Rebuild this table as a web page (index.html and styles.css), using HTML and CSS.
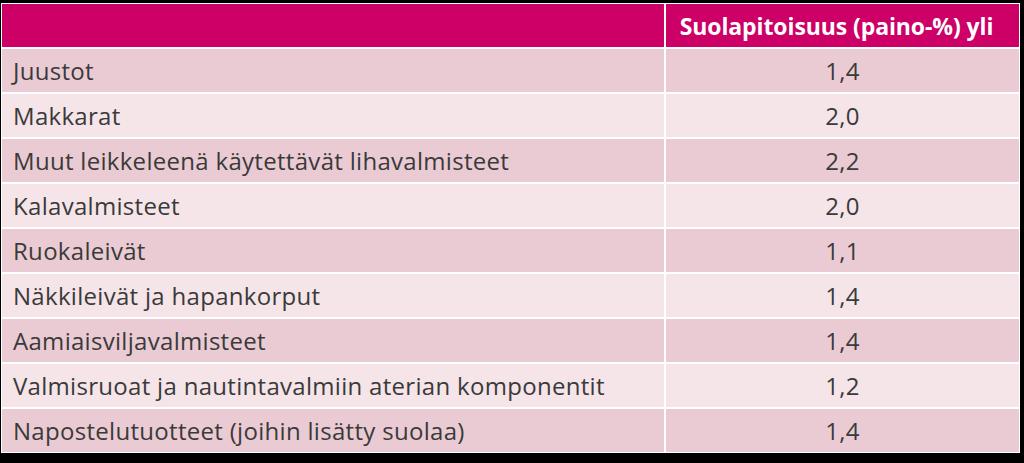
FILE: index.html
```html
<!DOCTYPE html>
<html lang="fi">
<head>
<meta charset="utf-8">
<title>Suolapitoisuus</title>
<link rel="stylesheet" href="styles.css">
</head>
<body>
<div class="table">
  <div class="cell head"></div>
  <div class="cell head val">Suolapitoisuus (paino-%) yli</div>
  <div class="cell odd">Juustot</div><div class="cell odd val">1,4</div>
  <div class="cell even">Makkarat</div><div class="cell even val">2,0</div>
  <div class="cell odd">Muut leikkeleenä käytettävät lihavalmisteet</div><div class="cell odd val">2,2</div>
  <div class="cell even">Kalavalmisteet</div><div class="cell even val">2,0</div>
  <div class="cell odd">Ruokaleivät</div><div class="cell odd val">1,1</div>
  <div class="cell even">Näkkileivät ja hapankorput</div><div class="cell even val">1,4</div>
  <div class="cell odd">Aamiaisviljavalmisteet</div><div class="cell odd val">1,4</div>
  <div class="cell even">Valmisruoat ja nautintavalmiin aterian komponentit</div><div class="cell even val">1,2</div>
  <div class="cell odd">Napostelutuotteet (joihin lisätty suolaa)</div><div class="cell odd val">1,4</div>
</div>
</body>
</html>
```
FILE: styles.css
```css
html, body {
  margin: 0;
  padding: 0;
  background: #000;
}
body {
  padding: 3px 0 0 1px;
  font-family: "Open Sans", "Liberation Sans", sans-serif;
}
.table {
  display: grid;
  grid-template-columns: 662px 353px;
  grid-auto-rows: 43px;
  gap: 2px;
  padding: 1px;
  background: #fff;
  width: max-content;
}
.cell {
  display: flex;
  align-items: center;
  padding-left: 11px;
  font-size: 24px;
  letter-spacing: 0.3px;
  color: #3a3a3a;
  white-space: nowrap;
}
.cell.val {
  justify-content: center;
  padding-left: 0;
}
.head {
  background: #cc0066;
  color: #fff;
  font-weight: 700;
  font-size: 23px;
  letter-spacing: -0.1px;
}
.head.val {
  padding-right: 12px;
}
.odd { background: #eacbd3; }
.even { background: #f5e5e9; }
```
